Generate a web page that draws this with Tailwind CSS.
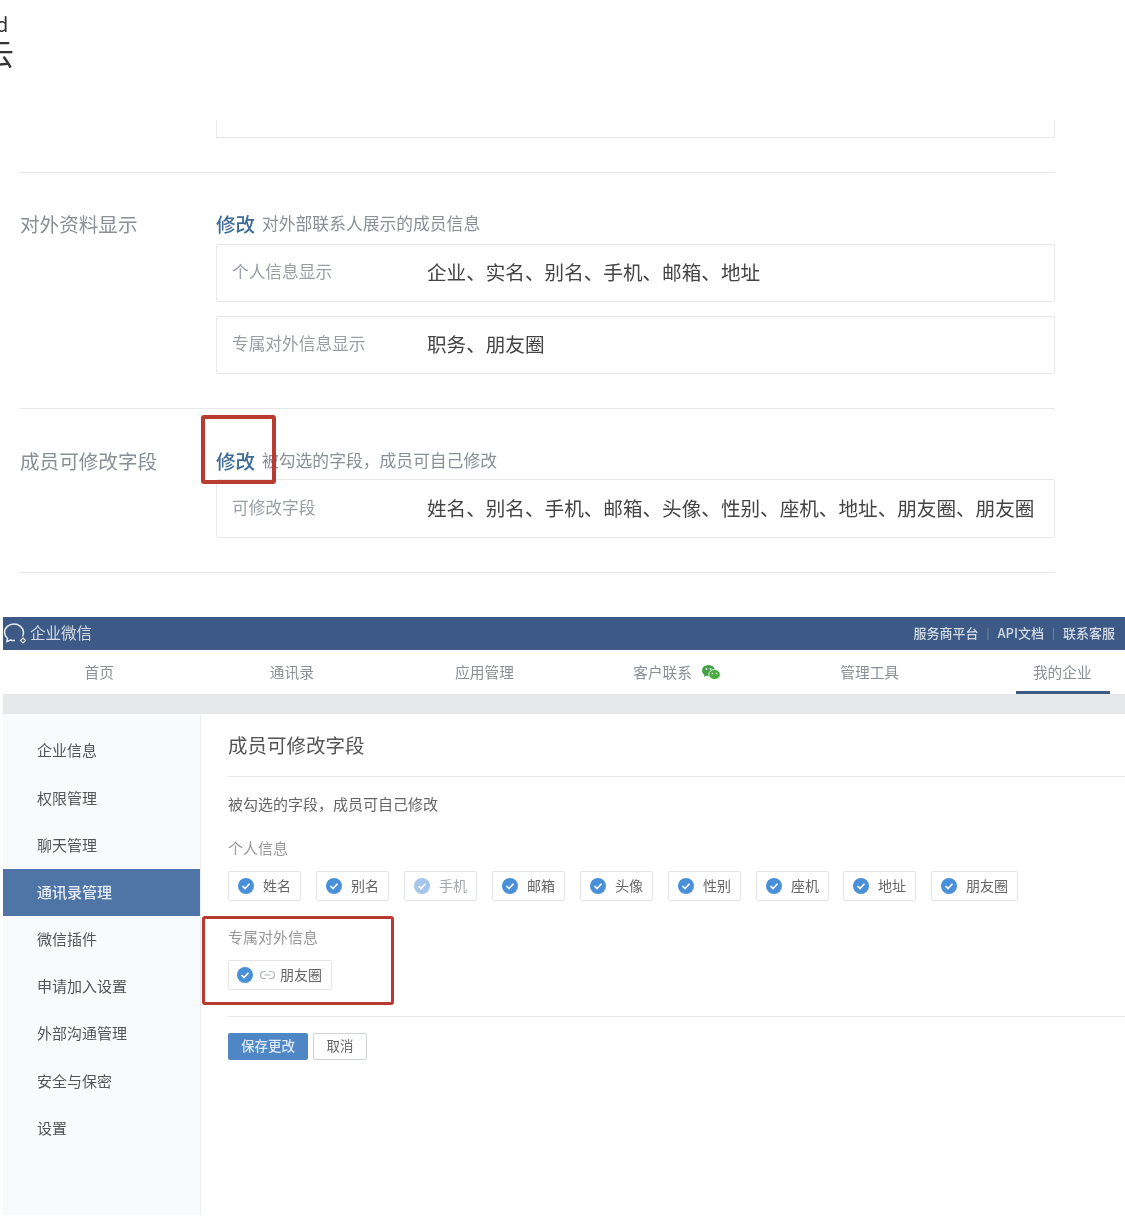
<!DOCTYPE html>
<html lang="zh-CN">

<head>
  <meta charset="UTF-8" />
  <title>成员可修改字段</title>
  <script src="https://cdn.jsdelivr.net/npm/@tailwindcss/browser@4"></script>
</head>

<body class="bg-white font-['Noto_Sans_CJK_SC','Liberation_Sans',sans-serif]">
  <div class="relative w-[1125px] h-[1222px] overflow-hidden blur-[0.6px]">

    <!-- Bout de texte coupé en haut à gauche -->
    <div class="absolute left-[-4px] top-[14px] text-[20px] leading-none text-[#333] whitespace-nowrap">d</div>
    <div class="absolute left-[-16px] top-[37px] text-[30px] leading-none text-[#333] whitespace-nowrap">云</div>

    <!-- Partie haute : réglages -->
    <section class="h-[617px] pl-[20px] pr-[70px] pt-[120px]">
      <div class="ml-[196px] h-[18px] border-x border-b border-[#e6e8eb]"></div>
      <div class="mt-[34px] border-t border-[#e6e8eb]"></div>

      <div class="flex h-[235px] pt-[36px]">
        <div class="w-[196px] text-[19.6px] leading-[30px] text-[#8a8f96]">对外资料显示</div>
        <div class="flex-1">
          <div class="flex items-center h-[30px]">
            <span class="text-[19.5px] text-[#3f6c96] font-medium">修改</span>
            <span class="ml-[7px] text-[16.8px] text-[#8a8f96]">对外部联系人展示的成员信息</span>
          </div>
          <div class="mt-[5px] flex items-center h-[58px] pl-[15px] pb-[2px] border border-[#e6e8eb] rounded-[2px]">
            <span class="w-[195px] text-[16.7px] text-[#9a9ea4]">个人信息显示</span>
            <span class="text-[19.6px] text-[#444]">企业、实名、别名、手机、邮箱、地址</span>
          </div>
          <div class="mt-[14px] flex items-center h-[58px] pl-[15px] pb-[2px] border border-[#e6e8eb] rounded-[2px]">
            <span class="w-[195px] text-[16.7px] text-[#9a9ea4]">专属对外信息显示</span>
            <span class="text-[19.6px] text-[#444]">职务、朋友圈</span>
          </div>
        </div>
      </div>

      <div class="border-t border-[#e6e8eb]"></div>
      <div class="flex h-[163px] pt-[37px]">
        <div class="w-[196px] text-[19.6px] leading-[30px] text-[#8a8f96]">成员可修改字段</div>
        <div class="flex-1">
          <div class="flex items-center h-[30px]">
            <span class="text-[19.5px] text-[#3f6c96] font-medium">修改</span>
            <span class="ml-[7px] text-[16.8px] text-[#8a8f96]">被勾选的字段，成员可自己修改</span>
          </div>
          <div class="mt-[3px] flex items-center h-[59px] pl-[15px] pb-[2px] border border-[#e6e8eb] rounded-[2px]">
            <span class="w-[195px] text-[16.7px] text-[#9a9ea4]">可修改字段</span>
            <span class="text-[19.6px] text-[#444] whitespace-nowrap">姓名、别名、手机、邮箱、头像、性别、座机、地址、朋友圈、朋友圈</span>
          </div>
        </div>
      </div>
      <div class="border-t border-[#e6e8eb]"></div>
    </section>

    <!-- Partie basse : capture de l'admin -->
    <section class="ml-[3px]">
      <header class="flex items-center justify-between h-[33px] pr-[10px] pb-[2px] bg-[#3c5a85] text-[#d5dce6]">
        <div class="flex items-center">
          <svg class="w-[25px] h-[25px] mt-[2px]" viewBox="0 0 25 25" fill="none" stroke="#e8edf3" stroke-width="1.5">
            <path d="M11 3C6 3 1.500 6.500 1.500 11.500C1.500 14 2.800 16 4.500 17.500L4 20.500L7.500 19C9 19.500 10 19.700 12 19.500" />
            <path d="M11 3C16 3 20 6.500 20.500 11C20.600 12.500 20.300 14 19.500 15.500" />
            <path d="M20 17L22.500 19.500L20 22L17.500 19.500Z" stroke-width="1.200" />
          </svg>
          <span class="ml-[2px] text-[15.5px]">企业微信</span>
        </div>
        <div class="flex items-center text-[13px] font-medium">
          <span>服务商平台</span>
          <span class="mx-[8px] text-[#7f94b2] font-normal text-[11px]">|</span>
          <span>API文档</span>
          <span class="mx-[8px] text-[#7f94b2] font-normal text-[11px]">|</span>
          <span>联系客服</span>
        </div>
      </header>

      <nav class="flex h-[44px] overflow-hidden text-[14.7px] text-[#8b9096]">
        <a class="w-[192.6px] shrink-0 flex items-center justify-center">首页</a>
        <a class="w-[192.6px] shrink-0 flex items-center justify-center">通讯录</a>
        <a class="w-[192.6px] shrink-0 flex items-center justify-center">应用管理</a>
        <a class="w-[192.6px] shrink-0 flex items-center justify-center">
          <span>客户联系</span>
          <svg class="ml-[9px] w-[20px] h-[17px]" viewBox="0 0 20 17">
            <ellipse cx="7.500" cy="6.500" rx="6.500" ry="5.500" fill="#3fa142" />
            <path d="M3.500 10L3 13L6 11Z" fill="#3fa142" />
            <ellipse cx="13.500" cy="10.500" rx="5.800" ry="5" fill="#49ad3c" stroke="#fff" stroke-width="0.800" />
            <circle cx="5.500" cy="5" r="0.900" fill="#fff" />
            <circle cx="9.500" cy="5" r="0.900" fill="#fff" />
            <circle cx="11.500" cy="9.500" r="0.800" fill="#fff" />
            <circle cx="15.500" cy="9.500" r="0.800" fill="#fff" />
          </svg>
        </a>
        <a class="w-[192.6px] shrink-0 flex items-center justify-center">管理工具</a>
        <a class="relative w-[192.6px] shrink-0 flex items-center justify-center">我的企业
          <span class="absolute bottom-0 left-[50px] w-[94px] h-[3px] bg-[#3c5a85]"></span>
        </a>
      </nav>

      <div class="h-[20px] bg-[#e6e8ea]"></div>

      <div class="flex h-[501px]">
        <aside class="w-[198px] shrink-0 pt-[13px] bg-[#f9fafc] border-r border-[#eceef1] text-[15px] text-[#555]">
          <div class="h-[47.2px] pl-[34px] flex items-center">企业信息</div>
          <div class="h-[47.2px] pl-[34px] flex items-center">权限管理</div>
          <div class="h-[47.2px] pl-[34px] flex items-center">聊天管理</div>
          <div class="h-[47.2px] pl-[34px] flex items-center bg-[#4f74a6] text-[#e8eef6] font-medium">通讯录管理</div>
          <div class="h-[47.2px] pl-[34px] flex items-center">微信插件</div>
          <div class="h-[47.2px] pl-[34px] flex items-center">申请加入设置</div>
          <div class="h-[47.2px] pl-[34px] flex items-center">外部沟通管理</div>
          <div class="h-[47.2px] pl-[34px] flex items-center">安全与保密</div>
          <div class="h-[47.2px] pl-[34px] flex items-center">设置</div>
        </aside>

        <main class="flex-1 pl-[27px]">
          <h1 class="h-[63px] flex items-center text-[19.5px] text-[#555] border-b border-[#e6e8eb]">成员可修改字段</h1>
          <p class="mt-[17px] h-[20px] flex items-center text-[15px] text-[#666]">被勾选的字段，成员可自己修改</p>
          <p class="mt-[24px] h-[20px] flex items-center text-[15px] text-[#999]">个人信息</p>

          <div class="mt-[13px] flex gap-[15px] text-[14px] text-[#666]">
            <div class="w-[73px] h-[30px] flex items-center pl-[9px] pb-px gap-[9px] border border-[#e3e5e8] rounded-[2px]">
              <svg class="w-[16px] h-[16px] shrink-0" viewBox="0 0 16 16"><circle cx="8" cy="8" r="8" fill="#4a90d9" /><path d="M4.500 8L7 10.500L11.500 5.800" fill="none" stroke="#fff" stroke-width="1.600" /></svg>
              <span>姓名</span>
            </div>
            <div class="w-[73px] h-[30px] flex items-center pl-[9px] pb-px gap-[9px] border border-[#e3e5e8] rounded-[2px]">
              <svg class="w-[16px] h-[16px] shrink-0" viewBox="0 0 16 16"><circle cx="8" cy="8" r="8" fill="#4a90d9" /><path d="M4.500 8L7 10.500L11.500 5.800" fill="none" stroke="#fff" stroke-width="1.600" /></svg>
              <span>别名</span>
            </div>
            <div class="w-[73px] h-[30px] flex items-center pl-[9px] pb-px gap-[9px] border border-[#e3e5e8] rounded-[2px] text-[#a3a7ac]">
              <svg class="w-[16px] h-[16px] shrink-0" viewBox="0 0 16 16"><circle cx="8" cy="8" r="8" fill="#a4c6ea" /><path d="M4.500 8L7 10.500L11.500 5.800" fill="none" stroke="#fff" stroke-width="1.600" /></svg>
              <span>手机</span>
            </div>
            <div class="w-[73px] h-[30px] flex items-center pl-[9px] pb-px gap-[9px] border border-[#e3e5e8] rounded-[2px]">
              <svg class="w-[16px] h-[16px] shrink-0" viewBox="0 0 16 16"><circle cx="8" cy="8" r="8" fill="#4a90d9" /><path d="M4.500 8L7 10.500L11.500 5.800" fill="none" stroke="#fff" stroke-width="1.600" /></svg>
              <span>邮箱</span>
            </div>
            <div class="w-[73px] h-[30px] flex items-center pl-[9px] pb-px gap-[9px] border border-[#e3e5e8] rounded-[2px]">
              <svg class="w-[16px] h-[16px] shrink-0" viewBox="0 0 16 16"><circle cx="8" cy="8" r="8" fill="#4a90d9" /><path d="M4.500 8L7 10.500L11.500 5.800" fill="none" stroke="#fff" stroke-width="1.600" /></svg>
              <span>头像</span>
            </div>
            <div class="w-[73px] h-[30px] flex items-center pl-[9px] pb-px gap-[9px] border border-[#e3e5e8] rounded-[2px]">
              <svg class="w-[16px] h-[16px] shrink-0" viewBox="0 0 16 16"><circle cx="8" cy="8" r="8" fill="#4a90d9" /><path d="M4.500 8L7 10.500L11.500 5.800" fill="none" stroke="#fff" stroke-width="1.600" /></svg>
              <span>性别</span>
            </div>
            <div class="w-[73px] h-[30px] flex items-center pl-[9px] pb-px gap-[9px] border border-[#e3e5e8] rounded-[2px]">
              <svg class="w-[16px] h-[16px] shrink-0" viewBox="0 0 16 16"><circle cx="8" cy="8" r="8" fill="#4a90d9" /><path d="M4.500 8L7 10.500L11.500 5.800" fill="none" stroke="#fff" stroke-width="1.600" /></svg>
              <span>座机</span>
            </div>
            <div class="w-[73px] h-[30px] flex items-center pl-[9px] pb-px gap-[9px] border border-[#e3e5e8] rounded-[2px] -ml-px">
              <svg class="w-[16px] h-[16px] shrink-0" viewBox="0 0 16 16"><circle cx="8" cy="8" r="8" fill="#4a90d9" /><path d="M4.500 8L7 10.500L11.500 5.800" fill="none" stroke="#fff" stroke-width="1.600" /></svg>
              <span>地址</span>
            </div>
            <div class="w-[87px] h-[30px] flex items-center pl-[9px] pb-px gap-[9px] border border-[#e3e5e8] rounded-[2px]">
              <svg class="w-[16px] h-[16px] shrink-0" viewBox="0 0 16 16"><circle cx="8" cy="8" r="8" fill="#4a90d9" /><path d="M4.500 8L7 10.500L11.500 5.800" fill="none" stroke="#fff" stroke-width="1.600" /></svg>
              <span>朋友圈</span>
            </div>
          </div>

          <p class="mt-[26px] h-[20px] flex items-center text-[15px] text-[#999]">专属对外信息</p>
          <div class="mt-[13px] w-[104px] h-[30px] flex items-center pl-[8px] pb-px border border-[#e3e5e8] rounded-[2px] text-[14px] text-[#666]">
            <svg class="w-[16px] h-[16px] shrink-0" viewBox="0 0 16 16"><circle cx="8" cy="8" r="8" fill="#4a90d9" /><path d="M4.500 8L7 10.500L11.500 5.800" fill="none" stroke="#fff" stroke-width="1.600" /></svg>
            <svg class="ml-[7px] w-[15px] h-[10px] shrink-0" viewBox="0 0 15 10" fill="none" stroke="#b5b8bc" stroke-width="1.200"><path d="M6 1.500H4A3.500 3.500 0 0 0 4 8.500H6" /><path d="M9 1.500H11A3.500 3.500 0 0 1 11 8.500H9" /><path d="M4.500 5H10.500" /></svg>
            <span class="ml-[5px]">朋友圈</span>
          </div>

          <div class="mt-[26px] border-t border-[#e6e8eb]"></div>
          <div class="mt-[16px] flex gap-[5px] text-[13.5px]">
            <button class="w-[80px] h-[27px] pb-[2px] rounded-[2px] bg-[#4f86c6] text-[#dce8f5] font-medium">保存更改</button>
            <button class="w-[54px] h-[27px] pb-[2px] rounded-[2px] border border-[#cfd2d6] text-[#666]">取消</button>
          </div>
        </main>
      </div>
    </section>

    <!-- Cadres rouges d'annotation -->
    <div class="absolute left-[201px] top-[415px] w-[75px] h-[69px] border-[4px] border-[#b83a30] rounded-[3px]"></div>
    <div class="absolute left-[202px] top-[916px] w-[192px] h-[89px] border-[3px] border-[#b83a30] rounded-[3px]"></div>
  </div>
</body>

</html>
